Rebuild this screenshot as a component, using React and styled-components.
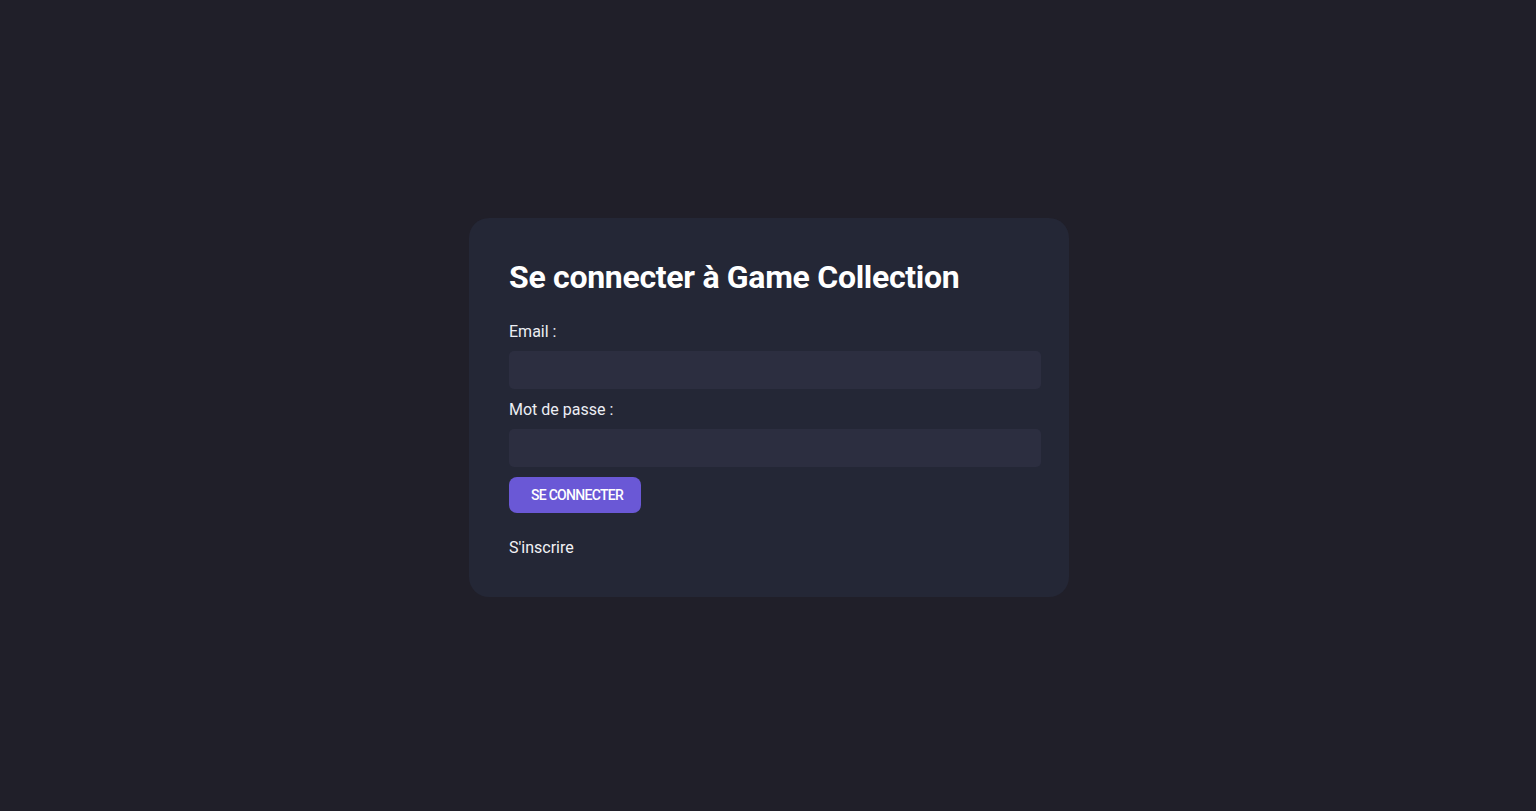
import React from "react";
import styled, { createGlobalStyle } from "styled-components";

const Global = createGlobalStyle`
  html, body { margin: 0; padding: 0; }
  body {
    background: #201f29;
    font-family: Roboto, "Liberation Sans", sans-serif;
    color: #f2f2f5;
  }
  * { box-sizing: border-box; }
`;

const Page = styled.main`
  min-height: 811px;
  display: flex;
  justify-content: center;
  padding: 218px 0 0 2px;
`;

const Card = styled.form`
  width: 600px;
  height: 379px;
  background: #242736;
  border-radius: 20px;
  padding: 40px;
  display: flex;
  flex-direction: column;
  align-items: flex-start;
`;

const Title = styled.h1`
  margin: 0 0 26px;
  font-size: 32px;
  line-height: 38px;
  font-weight: 700;
  letter-spacing: -0.3px;
  color: #ffffff;
`;

const Label = styled.label`
  display: block;
  font-size: 16px;
  line-height: 19px;
  margin-top: ${(p) => p.$top || 0}px;
  margin-bottom: 10px;
  color: #eceef4;
`;

const Input = styled.input`
  width: 532px;
  height: 38px;
  border: none;
  outline: none;
  border-radius: 5px;
  background: #2c2e40;
  color: #fff;
  padding: 0 12px;
  font-family: inherit;
  font-size: 16px;
`;

const Button = styled.button`
  margin-top: 10px;
  width: 132px;
  height: 36px;
  border: none;
  border-radius: 8px;
  background: #6a58d6;
  color: #ffffff;
  font-family: inherit;
  font-size: 14px;
  font-weight: 500;
  text-transform: uppercase;
  letter-spacing: -0.7px;
  padding: 0 0 0 4px;
  cursor: pointer;
`;

const Link = styled.a`
  margin-top: 25px;
  font-size: 16px;
  line-height: 19px;
  color: #f2f2f5;
  text-decoration: none;
  cursor: pointer;
`;

export default function App() {
  return (
    <>
      <Global />
      <Page>
        <Card onSubmit={(e) => e.preventDefault()}>
          <Title>Se connecter à Game Collection</Title>
          <Label htmlFor="email">Email :</Label>
          <Input id="email" type="email" />
          <Label htmlFor="password" $top={11}>Mot de passe :</Label>
          <Input id="password" type="password" />
          <Button type="submit">Se connecter</Button>
          <Link>S'inscrire</Link>
        </Card>
      </Page>
    </>
  );
}
